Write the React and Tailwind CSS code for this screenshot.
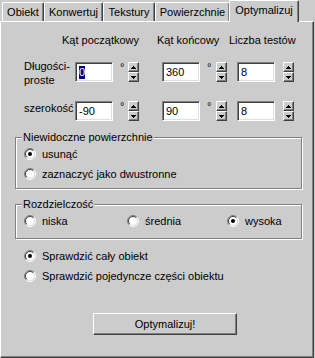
const raised = 'border border-t-white border-l-white border-b-[#404040] border-r-[#404040] shadow-[inset_-1px_-1px_0_#808080]'
const sunken = 'border border-t-[#808080] border-l-[#808080] border-b-white border-r-white shadow-[inset_1px_1px_0_#404040,inset_-1px_-1px_0_#dfdfdf]'
const etched = 'border border-[#808080] shadow-[inset_1px_1px_0_white,1px_1px_0_white]'

const Radio = ({ checked }) => (
  <svg width="12" height="12" viewBox="0 0 12 12" className="shrink-0">
    <circle cx="6" cy="6" r="4.5" fill="white" />
    <path d="M2.1 9.9 A5.5 5.5 0 0 1 9.9 2.1" stroke="#808080" fill="none" />
    <path d="M2.8 9.2 A4.5 4.5 0 0 1 9.2 2.8" stroke="#404040" fill="none" />
    <path d="M9.9 2.1 A5.5 5.5 0 0 1 2.1 9.9" stroke="#ffffff" fill="none" />
    <path d="M9.2 2.8 A4.5 4.5 0 0 1 2.8 9.2" stroke="#dfdfdf" fill="none" />
    {checked && <circle cx="6" cy="6" r="2" fill="black" />}
  </svg>
)

const RadioRow = ({ checked, label, className = '' }) => (
  <div className={`flex items-center h-[20px] gap-[6px] ${className}`}>
    <Radio checked={checked} />
    <span>{label}</span>
  </div>
)

const Arrow = ({ down }) => (
  <svg width="5" height="3" viewBox="0 0 5 3" shapeRendering="crispEdges">
    {down ? (
      <>
        <rect x="0" y="0" width="5" height="1" fill="black" />
        <rect x="1" y="1" width="3" height="1" fill="black" />
        <rect x="2" y="2" width="1" height="1" fill="black" />
      </>
    ) : (
      <>
        <rect x="2" y="0" width="1" height="1" fill="black" />
        <rect x="1" y="1" width="3" height="1" fill="black" />
        <rect x="0" y="2" width="5" height="1" fill="black" />
      </>
    )}
  </svg>
)

const Spinner = () => (
  <div className="flex flex-col w-[11px] h-[20px]">
    <div className={`h-[10px] flex items-center justify-center bg-[#cccccc] ${raised}`}>
      <Arrow />
    </div>
    <div className={`h-[10px] flex items-center justify-center bg-[#cccccc] ${raised}`}>
      <Arrow down />
    </div>
  </div>
)

const Field = ({ value, selected }) => (
  <div className={`w-[38px] h-[20px] bg-white flex items-center pl-[3px] ${sunken}`}>
    {selected ? <span className="bg-[#000080] text-white leading-[13px]">{value}</span> : <span>{value}</span>}
  </div>
)

const Degree = ({ w }) => (
  <div className={`${w} h-[20px] pl-[7px] leading-[10px] text-[11px]`}>°</div>
)

const Tab = ({ label, w, active }) => (
  <div
    className={`${w} flex items-center justify-center border-t border-l border-t-white border-l-white border-r border-r-[#404040] shadow-[inset_-1px_0_0_#808080] bg-[#cccccc] rounded-t-[2px] ${
      active ? 'h-[22px] -mb-[1px] relative z-10 -mx-[1px] pb-[2px]' : 'h-[19px]'
    }`}
  >
    {label}
  </div>
)

const App = () => {
  return (
    <div className="w-[315px] h-[358px] bg-[#cccccc] text-black text-[11px] leading-[13px] font-['Liberation_Sans',Arial,sans-serif] overflow-hidden">
      <div className="flex items-end h-[21px] pl-[2px]">
        <Tab label="Obiekt" w="w-[42px]" />
        <Tab label="Konwertuj" w="w-[59px]" />
        <Tab label="Tekstury" w="w-[52px]" />
        <Tab label="Powierzchnie" w="w-[75px]" />
        <Tab label="Optymalizuj" w="w-[70px]" active />
      </div>
      <div className="w-[314px] h-[337px] border border-t-white border-l-white border-r-[#404040] border-b-[#404040] shadow-[inset_-1px_-1px_0_#808080] flex flex-col">
        <div className="flex mt-[12px]">
          <span className="ml-[61px] w-[95px]">Kąt początkowy</span>
          <span className="w-[72px]">Kąt końcowy</span>
          <span>Liczba testów</span>
        </div>

        <div className="flex mt-[15px] ml-[23px]">
          <div className="w-[51px] leading-[14px] -mt-[3px]">
            Długości-
            <br />
            proste
          </div>
          <Field value="0" selected />
          <Degree w="w-[15px]" />
          <Spinner />
          <div className="w-[23px]" />
          <Field value="360" />
          <Degree w="w-[16px]" />
          <Spinner />
          <div className="w-[10px]" />
          <Field value="8" />
          <div className="w-[8px]" />
          <Spinner />
        </div>

        <div className="flex mt-[14px] ml-[23px]">
          <div className="w-[51px] pt-[1px]">szerokość</div>
          <Field value="-90" />
          <Degree w="w-[15px]" />
          <Spinner />
          <div className="w-[23px]" />
          <Field value="90" />
          <Degree w="w-[16px]" />
          <Spinner />
          <div className="w-[10px]" />
          <Field value="8" />
          <div className="w-[8px]" />
          <Spinner />
        </div>

        <div className={`mt-[16px] ml-[14px] w-[287px] ${etched} pl-[8px] pb-[4px]`}>
          <div className="-mt-[7px] ml-[-2px] w-fit px-[1px] bg-[#cccccc]">Niewidoczne powierzchnie</div>
          <RadioRow checked label="usunąć" />
          <RadioRow label="zaznaczyć jako dwustronne" />
        </div>

        <div className={`mt-[15px] ml-[14px] w-[287px] ${etched} pl-[8px] pb-[7px]`}>
          <div className="-mt-[7px] ml-[-2px] w-fit px-[1px] bg-[#cccccc]">Rozdzielczość</div>
          <div className="flex">
            <RadioRow label="niska" className="w-[103px]" />
            <RadioRow label="średnia" className="w-[100px]" />
            <RadioRow checked label="wysoka" />
          </div>
        </div>

        <div className="mt-[7px] ml-[23px]">
          <RadioRow checked label="Sprawdzić cały obiekt" />
          <RadioRow label="Sprawdzić pojedyncze części obiektu" />
        </div>

        <div className="mt-[27px] ml-[92px]">
          <div className={`w-[144px] h-[22px] flex items-center justify-center ${raised}`}>Optymalizuj!</div>
        </div>
      </div>
    </div>
  )
}

export default App
